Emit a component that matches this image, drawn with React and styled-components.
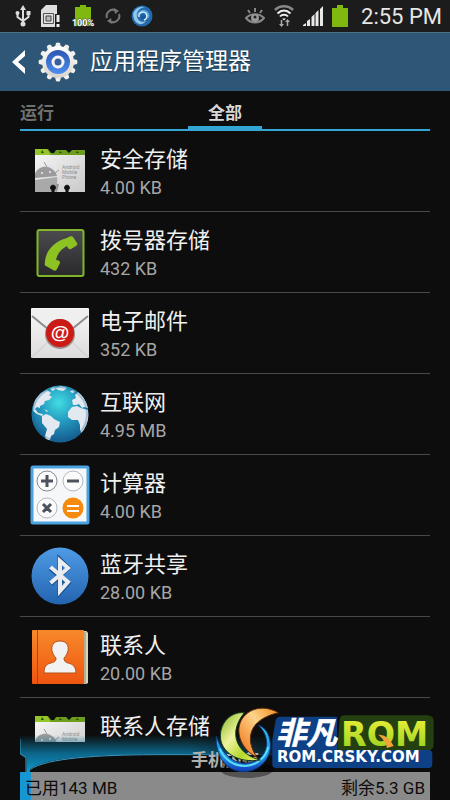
import { useState } from "react";
import styled, { createGlobalStyle } from "styled-components";

const apps = [
  { name: "安全存储", size: "4.00 KB", icon: CardIcon },
  { name: "拨号器存储", size: "432 KB", icon: DialerIcon },
  { name: "电子邮件", size: "352 KB", icon: MailIcon },
  { name: "互联网", size: "4.95 MB", icon: GlobeIcon },
  { name: "计算器", size: "4.00 KB", icon: CalculatorIcon },
  { name: "蓝牙共享", size: "28.00 KB", icon: BluetoothIcon },
  { name: "联系人", size: "20.00 KB", icon: ContactsIcon },
  { name: "联系人存储", icon: CardIcon },
];

const tabs = ["运行", "全部"];
const storage = { usedMb: 143, freeGb: 5.3 };

export default function App() {
  const [active, setActive] = useState("全部");
  const used =
    (storage.usedMb / (storage.usedMb + storage.freeGb * 1024)) * 100;

  return (
    <Screen>
      <GlobalStyle />
      <StatusBar>
        <StatusGroup>
          <UsbIcon />
          <SimIcon />
          <BatteryFull />
          <SyncIcon />
          <SwirlIcon />
        </StatusGroup>
        <StatusGroup $right>
          <EyeIcon />
          <WifiIcon />
          <SignalIcon />
          <BatteryIcon />
          <Clock>2:55 PM</Clock>
        </StatusGroup>
      </StatusBar>

      <Header>
        <BackButton aria-label="返回">
          <svg width="14" height="24" viewBox="0 0 14 24">
            <path d="M13 0v6L6 12l7 6v6L0 12z" fill="#fff" />
          </svg>
          <GearIcon />
        </BackButton>
        <Title>应用程序管理器</Title>
      </Header>

      <Tabs role="tablist">
        {tabs.map((tab) => (
          <Tab
            key={tab}
            role="tab"
            aria-selected={tab === active}
            $active={tab === active}
            onClick={() => setActive(tab)}
          >
            {tab}
          </Tab>
        ))}
      </Tabs>

      <List>
        {apps.map(({ name, size, icon: Icon }) => (
          <Item key={name}>
            <Row>
              <Icon />
              <RowText>
                <Name>{name}</Name>
                <Size>{size}</Size>
              </RowText>
            </Row>
          </Item>
        ))}
      </List>

      <Footer>
        <Glow />
        <FooterTitle>手机内存</FooterTitle>
        <Meter>
          <MeterFill style={{ width: `${used}%` }} />
          <MeterText>已用{storage.usedMb} MB</MeterText>
          <MeterText>剩余{storage.freeGb} GB</MeterText>
        </Meter>
        <Logo />
      </Footer>
    </Screen>
  );
}

/* status bar */

function UsbIcon() {
  return (
    <svg width="16" height="24" viewBox="0 0 16 24" fill="none" stroke="#ddd" strokeWidth="2">
      <path d="M8 4v16M2.500 9v4L8 17l5.500-4V9" />
      <path d="M8 1l3 5H5z" fill="#ddd" stroke="none" />
      <circle cx="8" cy="20" r="2.500" fill="#ddd" stroke="none" />
      <circle cx="2.500" cy="9" r="2" fill="#ddd" stroke="none" />
      <path d="M11.500 7h4v4h-4z" fill="#ddd" stroke="none" />
    </svg>
  );
}

function SimIcon() {
  return (
    <svg width="20" height="24" viewBox="0 0 20 24">
      <path d="M0 6l5-5h11v9h-2v13H0z" fill="#dedede" />
      <path d="M2.500 9.500h10v10h-10z" fill="none" stroke="#555" />
      <path d="M5 12h5v5H5z" fill="#bbb" stroke="#444" />
      <path d="M15.500 11h3v7h-3zM15.500 20h3v3h-3z" fill="#eee" />
    </svg>
  );
}

function BatteryFull() {
  return (
    <svg width="24" height="24" viewBox="0 0 24 24">
      <path d="M4 3h5V1h6v2h5v19H4z" fill="#7fb80e" />
      <text
        x="12"
        y="22"
        textAnchor="middle"
        fontFamily="Roboto, sans-serif"
        fontSize="9"
        fontWeight="700"
        fill="#fff"
        stroke="#444"
        strokeWidth="1"
        paintOrder="stroke"
      >
        100%
      </text>
    </svg>
  );
}

function SyncIcon() {
  return (
    <svg width="16" height="16" viewBox="0 0 16 16" fill="none" stroke="#777" strokeWidth="2">
      <path d="M2 10A6.200 6.200 0 0 1 11 2.600M14 6A6.200 6.200 0 0 1 5 13.400" />
      <path d="M9 0l5 3-4 3zM7 16l-5-3 4-3z" fill="#777" stroke="none" />
    </svg>
  );
}

function SwirlIcon() {
  return (
    <svg width="22" height="22" viewBox="0 0 22 22">
      <circle cx="11" cy="11" r="10.500" fill="#2469ab" />
      <path d="M2 9C4 3 9 1 14 2c-6 1-9 5-8 10 1 4 5 6 9 4-3 5-12 5-13-7z" fill="#8fc8ec" />
      <path d="M6 12c0-5 4-8 8-7 4 1 6 6 3 9-1-4-2-6-5-6s-5 2-6 4z" fill="#57a5dc" />
      <path d="M8 12a4 4 0 1 1 5 3" fill="none" stroke="#d6effb" strokeWidth="1.500" />
      <circle cx="12" cy="12" r="2" fill="#1a5799" />
    </svg>
  );
}

function EyeIcon() {
  return (
    <svg width="20" height="18" viewBox="0 0 20 18" fill="none" stroke="#888" strokeWidth="2">
      <path d="M1 11c5-5 13-5 18 0-5 6-13 6-18 0z" />
      <path d="M10 5V1M5 6L3 3M15 6l2-3" />
      <circle cx="10" cy="11" r="4" fill="#999" stroke="none" />
      <circle cx="10" cy="10" r="1.500" fill="#222" stroke="none" />
    </svg>
  );
}

function WifiIcon() {
  return (
    <svg width="20" height="24" viewBox="0 0 20 24" fill="none">
      <path d="M1 6c5-5 13-5 18 0" stroke="#888" strokeWidth="2.500" />
      <path d="M3.500 9.500c4-4 9-4 13 0M6 12.500c2-2.500 6-2.500 8 0" stroke="#eee" strokeWidth="2" />
      <path d="M8 14.500h4l-2 2z" fill="#eee" />
      <path d="M7.500 16v5M13.500 22v-5" stroke="#aaa" strokeWidth="1.500" />
      <path d="M5 20h5l-2.500 3zM11 18h5l-2.500-3z" fill="#aaa" />
    </svg>
  );
}

function SignalIcon() {
  return (
    <svg width="20" height="20" viewBox="0 0 20 20" fill="#e8e8e8">
      <path d="M0 20v-1l3-2v3zM4 20v-5l3-2v7zM8.500 20v-9l3-3v12zM12.500 20V7l3-3v16zM17 20V3l3-3v20z" />
    </svg>
  );
}

function BatteryIcon() {
  return (
    <svg width="16" height="22" viewBox="0 0 16 22">
      <path d="M0 3h5V0h6v3h5v19H0z" fill="#7fb80e" />
    </svg>
  );
}

function GearIcon() {
  const teeth = Array.from({ length: 12 }, (_, i) => i * 30);
  return (
    <svg width="40" height="40" viewBox="0 0 40 40">
      <defs>
        <linearGradient id="gear" x1="0" y1="0" x2="0" y2="1">
          <stop offset="0" stopColor="#fff" />
          <stop offset="1" stopColor="#d8d4cc" />
        </linearGradient>
        <linearGradient id="gearBlue" x1="0" y1="0" x2="0" y2="1">
          <stop offset="0" stopColor="#2b57b0" />
          <stop offset="1" stopColor="#4d8df0" />
        </linearGradient>
      </defs>
      {teeth.map((deg) => (
        <path
          key={deg}
          d="M17 5l1-4q2-1 4 0l1 4z"
          fill="#f1efec"
          transform={`rotate(${deg} 20 20)`}
        />
      ))}
      <circle cx="20" cy="20" r="16" fill="url(#gear)" />
      <circle cx="20" cy="20" r="12" fill="url(#gearBlue)" />
      <circle cx="20" cy="20" r="5" fill="#3b5e9c" stroke="#f4f4f4" strokeWidth="3" />
    </svg>
  );
}

/* app icons */

function CardIcon() {
  return (
    <AppIcon viewBox="0 0 60 60">
      <defs>
        <linearGradient id="card" x1="0" y1="0" x2="1" y2="1">
          <stop offset="0" stopColor="#f4f4f4" />
          <stop offset="1" stopColor="#c9c9c9" />
        </linearGradient>
        <clipPath id="cardClip">
          <path d="M5 14h50v37H5z" />
        </clipPath>
      </defs>
      <path d="M5 8h13l3 4h3l2-3h10l3 3 3-3h13v7H5z" fill="#6c9d1c" />
      <path d="M5 8h12l4 6H5z" fill="#94c62a" />
      <path d="M11 12l1-3 2 3zM29 12l1-2 2 2zM46 12l1-2 2 2z" fill="#2c4a05" />
      <path d="M5 14h50v37H5z" fill="url(#card)" />
      <g clipPath="url(#cardClip)">
        <path d="M5 33c4-11 19-9 22 2L5 37z" fill="#9b9b9b" />
        <path d="M5 39l22-3c1 7-1 12-7 15H5z" fill="#a9a9a9" />
        <path d="M14 21l3 5M29 29l-5 4" stroke="#999" />
        <path d="M23 50l3-7q3-1 3 1l-2 7z" fill="#999" />
        <circle cx="12" cy="32" r="1" fill="#eee" />
        <circle cx="20" cy="31" r="1" fill="#eee" />
      </g>
      <text fontFamily="Roboto, sans-serif" fontSize="5" fill="#8d8d8d">
        <tspan x="32" y="28">Android</tspan>
        <tspan x="32" y="33">Mobile</tspan>
        <tspan x="32" y="38">Phone</tspan>
      </text>
      <path d="M22 51v-2a2.500 2.500 0 1 1 2 0v2zM36 51v-2a2.500 2.500 0 1 1 2 0v2z" fill="#111" stroke="#111" />
    </AppIcon>
  );
}

function DialerIcon() {
  return (
    <AppIcon viewBox="0 0 60 60">
      <defs>
        <linearGradient id="dial" x1="0" y1="0" x2="0" y2="1">
          <stop offset="0" stopColor="#4c4c50" />
          <stop offset="1" stopColor="#29292c" />
        </linearGradient>
      </defs>
      <rect x="7.500" y="8" width="46" height="46" rx="2" fill="url(#dial)" stroke="#82b52a" strokeWidth="2" />
      <path
        d="M37 16c3-2 5-2 6-1l4 6c1 1 0 2-1 3l-5 3c-2 1-3-1-4-3-6 3-10 8-11 14 3 0 4 1 4 3l-3 6c-1 2-2 2-4 1l-7-4c-2-1-1-3-1-5 1-10 9-20 22-23z"
        fill="#8cc322"
      />
    </AppIcon>
  );
}

function MailIcon() {
  return (
    <AppIcon viewBox="0 0 60 60">
      <defs>
        <linearGradient id="mail" x1="0" y1="0" x2="0" y2="1">
          <stop offset="0" stopColor="#f7f7f7" />
          <stop offset="1" stopColor="#dcdcdc" />
        </linearGradient>
      </defs>
      <rect x="1" y="5" width="58" height="50" rx="1" fill="url(#mail)" />
      <path d="M2 54l20-19M58 54L38 35" stroke="#c9c9c9" />
      <path d="M2 13l28 23 28-23" fill="none" stroke="#8c8c8c" strokeWidth="2" />
      <path d="M2 6h56v5L30 34 2 11z" fill="#efefef" />
      <circle cx="30" cy="31" r="15" fill="#9a8a88" />
      <circle cx="30" cy="30" r="14" fill="#cc1a14" />
      <text x="30" y="36" textAnchor="middle" fontFamily="Liberation Sans, sans-serif" fontSize="19" fontWeight="700" fill="#fff">
        @
      </text>
    </AppIcon>
  );
}

function GlobeIcon() {
  return (
    <AppIcon viewBox="0 0 60 60">
      <defs>
        <radialGradient id="sea" cx="0.48" cy="0.3" r="0.65">
          <stop offset="0" stopColor="#43dce2" />
          <stop offset="0.5" stopColor="#249cc1" />
          <stop offset="1" stopColor="#176394" />
        </radialGradient>
        <clipPath id="globeClip">
          <circle cx="30" cy="30" r="28.500" />
        </clipPath>
      </defs>
      <circle cx="30" cy="30" r="28.500" fill="url(#sea)" />
      <g clipPath="url(#globeClip)" fill="#e3e9f0">
        <path d="M3 24l2-8 6-7 6-3 4 3-2 2 3 2-3 3-4 1-1 3-4 2 0 2-3-1-2 2 1 3-2-1z" />
        <path d="M3 25l3 1 2 3 5 1-1 2-5-2-4-3z" />
        <path d="M14 25l4 2-1 1z" />
        <path d="M20 5l3-2 3 1-3 3zM25 4l6-2 6 2-4 3-5-1zM40 7l3-1 2 2-3 1z" />
        <path d="M12 32l4-2 5 2 3 3 6 3-1 5-4 3-1 4-3 2-1 4-4 0-1-4 2-7-5-6z" />
        <path d="M42 16l4-2-1-3 3-3 6 5 4 8v3l-4-1-2 1-3-4-3 1-3 0z" />
        <path d="M42 23l5-1 4 2 7 2 1 8-3 11-4 5-2-4 0-5-2-5-6 0-4-3 0-5z" />
      </g>
      <circle cx="30" cy="30" r="27" fill="none" stroke="#145f92" strokeWidth="2" opacity="0.3" />
    </AppIcon>
  );
}

function CalculatorIcon() {
  return (
    <AppIcon viewBox="0 0 60 60">
      <rect x="2" y="2" width="56" height="56" rx="1" fill="#f6f7f8" stroke="#4aa3df" strokeWidth="3" />
      <g fill="#fbfbfb" stroke="#b5b8bd">
        <circle cx="17" cy="16" r="10" stroke="#858a91" />
        <circle cx="43" cy="16" r="10" />
        <circle cx="17" cy="43" r="10" />
      </g>
      <circle cx="43" cy="43" r="10.500" fill="#f58a0d" />
      <path d="M17 10v12M11 16h12M37 16h12M13 39l8 8M21 39l-8 8" stroke="#4c535d" strokeWidth="3" />
      <path d="M37 41h12M37 46h12" stroke="#fff" strokeWidth="2" />
    </AppIcon>
  );
}

function BluetoothIcon() {
  return (
    <AppIcon viewBox="0 0 60 60">
      <defs>
        <linearGradient id="bt" x1="0" y1="0" x2="0" y2="1">
          <stop offset="0" stopColor="#4f9be5" />
          <stop offset="1" stopColor="#2464b0" />
        </linearGradient>
      </defs>
      <circle cx="30" cy="30" r="28.500" fill="url(#bt)" />
      <path d="M20.500 22L38 37 30 46V14l8 8L20.500 38" fill="none" stroke="#174f91" strokeWidth="5" />
      <path d="M20.500 21L38 36 30 45V15l8 7L20.500 37" fill="none" stroke="#e9edf0" strokeWidth="4" />
    </AppIcon>
  );
}

function ContactsIcon() {
  return (
    <AppIcon viewBox="0 0 60 60">
      <defs>
        <linearGradient id="book" x1="0" y1="0" x2="0" y2="1">
          <stop offset="0" stopColor="#f8892b" />
          <stop offset="1" stopColor="#ee5510" />
        </linearGradient>
      </defs>
      <path d="M50 4h6q1 0 2 2v50q-1 1-3 1h-5z" fill="#d9d5ba" />
      <path d="M55 5v52" stroke="#8b8b72" />
      <rect x="2" y="3" width="52" height="54" rx="1" fill="url(#book)" />
      <path d="M7.500 3v54" stroke="#b8440c" />
      <path
        d="M30 14c7 0 9 5 8 10-1 3-2 5-4 7 0 3 1 4 4 5 5 1 8 4 8 10H14c0-6 2-9 7-10 4-1 5-2 5-5-2-2-3-4-4-7-1-5 1-10 8-10z"
        fill="#f2f2f2"
        stroke="#b85018"
      />
    </AppIcon>
  );
}

/* overlays at the bottom */

function Glow() {
  return (
    <GlowSvg viewBox="0 0 840 120">
      <defs>
        <linearGradient id="glow" x1="0" y1="0" x2="0" y2="120" gradientUnits="userSpaceOnUse">
          <stop offset="0" stopColor="#0c7096" stopOpacity="0" />
          <stop offset="0.45" stopColor="#0b6f96" stopOpacity="0.9" />
          <stop offset="1" stopColor="#12a0dc" />
        </linearGradient>
        <linearGradient id="fade" x1="0" y1="0" x2="1" y2="0">
          <stop offset="0.6" stopColor="#fff" />
          <stop offset="1" stopColor="#fff" stopOpacity="0" />
        </linearGradient>
        <mask id="glowMask">
          <path d="M0 0h840v120H0z" fill="url(#fade)" />
        </mask>
      </defs>
      <g mask="url(#glowMask)">
        <path d="M0 0h840v58H400C240 60 80 66 30 102v18H20V68L0 56z" fill="url(#glow)" />
        <path d="M0 12v44l18 12v52M30 104C80 68 240 60 400 59h440" fill="none" stroke="#3b9ac2" strokeWidth="3" />
      </g>
    </GlowSvg>
  );
}

function Logo() {
  return (
    <LogoSvg viewBox="0 0 735 330" role="img" aria-label="非凡ROM">
      <defs>
        <linearGradient id="leafGreen" x1="0" y1="0" x2="1" y2="1">
          <stop offset="0" stopColor="#7fb51c" />
          <stop offset="0.4" stopColor="#f0f4a0" />
          <stop offset="0.7" stopColor="#b4d82c" />
          <stop offset="1" stopColor="#e8ee70" />
        </linearGradient>
        <linearGradient id="leafOrange" x1="1" y1="0" x2="0" y2="1">
          <stop offset="0" stopColor="#f08a1a" />
          <stop offset="0.4" stopColor="#fdd38a" />
          <stop offset="1" stopColor="#ee6a0c" />
        </linearGradient>
        <linearGradient id="ring" x1="0" y1="0" x2="0" y2="1">
          <stop offset="0" stopColor="#35c3f2" />
          <stop offset="0.7" stopColor="#1d8ae0" />
          <stop offset="1" stopColor="#1238b8" />
        </linearGradient>
        <linearGradient id="rom" x1="0" y1="0" x2="0" y2="1">
          <stop offset="0" stopColor="#f4f03c" />
          <stop offset="1" stopColor="#8fd01c" />
        </linearGradient>
      </defs>
      <ellipse cx="125" cy="238" rx="80" ry="26" fill="#000" opacity="0.4" />
      <g transform="translate(0 30)">
        <path
          d="M34 108C30 170 66 216 118 215 170 212 200 170 196 130 193 100 180 82 160 76 178 92 188 116 184 140 178 172 150 190 118 190 80 188 50 160 34 108z"
          fill="url(#ring)"
          stroke="#0a3a7a"
          strokeWidth="3"
        />
        <path d="M44 146c14 34 44 52 76 52 36-2 62-24 70-58" fill="none" stroke="#59dcfa" strokeWidth="6" />
        <path
          d="M118 38C70 34 38 80 48 124 58 160 100 190 166 180 110 168 60 110 118 38z"
          fill="url(#leafGreen)"
          stroke="#17391f"
          strokeWidth="3"
        />
        <path
          d="M220 38C180 14 130 22 108 62 90 100 110 150 156 172 120 120 128 60 220 38z"
          fill="url(#leafOrange)"
          stroke="#5a2a08"
          strokeWidth="3"
        />
      </g>
      <path d="M226 80h170v100h274q12 0 12 12v30q0 12-12 12H214q-12 0-12-12V150l10-60q4-10 14-10z" fill="#0d4085" />
      <path d="M404 92q0-16 16-16h246q20 0 20 18v70q0 16-16 16H396z" fill="#244010" />
      <text x="212" y="162" fontFamily="Noto Sans CJK SC, sans-serif" fontSize="92" fontWeight="700" fontStyle="italic" fill="#fff" stroke="#fff" strokeWidth="2">
        非凡
      </text>
      <text x="408" y="167" fontFamily="DejaVu Sans, sans-serif" fontSize="100" fontWeight="700" fill="url(#rom)">
        ROM
      </text>
      <path d="M520 134q28-2 46 34l-20 6q-4-22-26-40z" fill="#f2a23a" />
      <text x="216" y="216" fontFamily="DejaVu Sans, sans-serif" fontSize="45" fontWeight="700" fill="#fff">
        ROM.CRSKY.COM
      </text>
    </LogoSvg>
  );
}

const GlobalStyle = createGlobalStyle`
  * {
    box-sizing: border-box;
  }
  body {
    margin: 0;
    background: #0d0d0d;
  }
  button {
    background: none;
    border: 0;
    padding: 0;
    color: inherit;
    font: inherit;
    cursor: pointer;
  }
`;

const Screen = styled.div`
  display: flex;
  flex-direction: column;
  height: 100vh;
  overflow: hidden;
  background: #0d0d0d;
  color: #f0f0f0;
  font-family: Roboto, "Noto Sans CJK SC", sans-serif;
`;

const StatusBar = styled.div`
  display: flex;
  justify-content: space-between;
  flex: none;
  height: 32px;
  padding: 0 8px 0 15px;
  background: #1c1c1c;
`;

const StatusGroup = styled.div`
  display: flex;
  align-items: center;
  gap: ${(props) => (props.$right ? "9px" : "10px")};
`;

const Clock = styled.time`
  margin-left: 4px;
  font-size: 22px;
  color: #e6e6e6;
`;

const Header = styled.header`
  display: flex;
  align-items: center;
  flex: none;
  gap: 12px;
  height: 59px;
  padding: 0 12px;
  border-top: 1px solid #4b7180;
  background: #2e5777;
`;

const BackButton = styled.button`
  display: flex;
  align-items: center;
  gap: 12px;
`;

const Title = styled.h1`
  margin: 0;
  font-size: 23px;
  font-weight: 400;
  line-height: 32px;
  color: #fff;
  text-shadow: 0 1px 1px #1b3449;
`;

const Tabs = styled.div`
  display: flex;
  justify-content: space-between;
  flex: none;
  height: 40px;
  margin: 0 20px;
  border-bottom: 2px solid #34a6d5;

  /* keeps the second tab centred */
  &::after {
    content: "";
    width: 34px;
  }
`;

const Tab = styled.button`
  min-width: ${(props) => (props.$active ? "74px" : "34px")};
  padding-top: 6px;
  border-bottom: 3px solid ${(props) => (props.$active ? "#34a6d5" : "transparent")};
  font-size: 17px;
  font-weight: 700;
  color: ${(props) => (props.$active ? "#d8d8d8" : "#707070")};
`;

const List = styled.ul`
  flex: 1;
  min-height: 0;
  margin: 0 20px;
  padding: 0;
  overflow-y: auto;
  scrollbar-width: none;
  list-style: none;
`;

const Item = styled.li`
  border-bottom: 1px solid #484848;
`;

const Row = styled.button`
  display: flex;
  align-items: center;
  gap: 10px;
  width: 100%;
  height: 80px;
  padding: 0 10px;
  text-align: left;
`;

const AppIcon = styled.svg`
  flex: none;
  width: 60px;
  height: 60px;
`;

const RowText = styled.span`
  display: flex;
  flex-direction: column;
  padding-top: 6px;
  line-height: 28px;
`;

const Name = styled.span`
  font-size: 22px;
`;

const Size = styled.span`
  min-height: 28px;
  font-size: 18px;
  color: #a6a6a6;
`;

const Footer = styled.footer`
  position: relative;
  flex: none;
`;

const FooterTitle = styled.h2`
  position: relative;
  margin: 0;
  padding-top: 6px;
  font-size: 17px;
  font-weight: 700;
  line-height: 24px;
  text-align: center;
  color: #b0b0b0;
`;

const Meter = styled.div`
  position: relative;
  display: flex;
  justify-content: space-between;
  align-items: center;
  height: 28px;
  margin: 0 20px;
  padding: 0 5px;
  background: #8a8a8a;
`;

const MeterFill = styled.div`
  position: absolute;
  inset: 0 auto 0 0;
  background: #1696d2;
`;

const MeterText = styled.span`
  position: relative;
  font-size: 17px;
  color: #0c0c0c;
`;

const GlowSvg = styled.svg`
  position: absolute;
  left: 20px;
  bottom: 25px;
  width: 280px;
  height: 40px;
`;

const LogoSvg = styled.svg`
  position: absolute;
  right: 0;
  bottom: 0;
  width: 245px;
  height: 110px;
`;
